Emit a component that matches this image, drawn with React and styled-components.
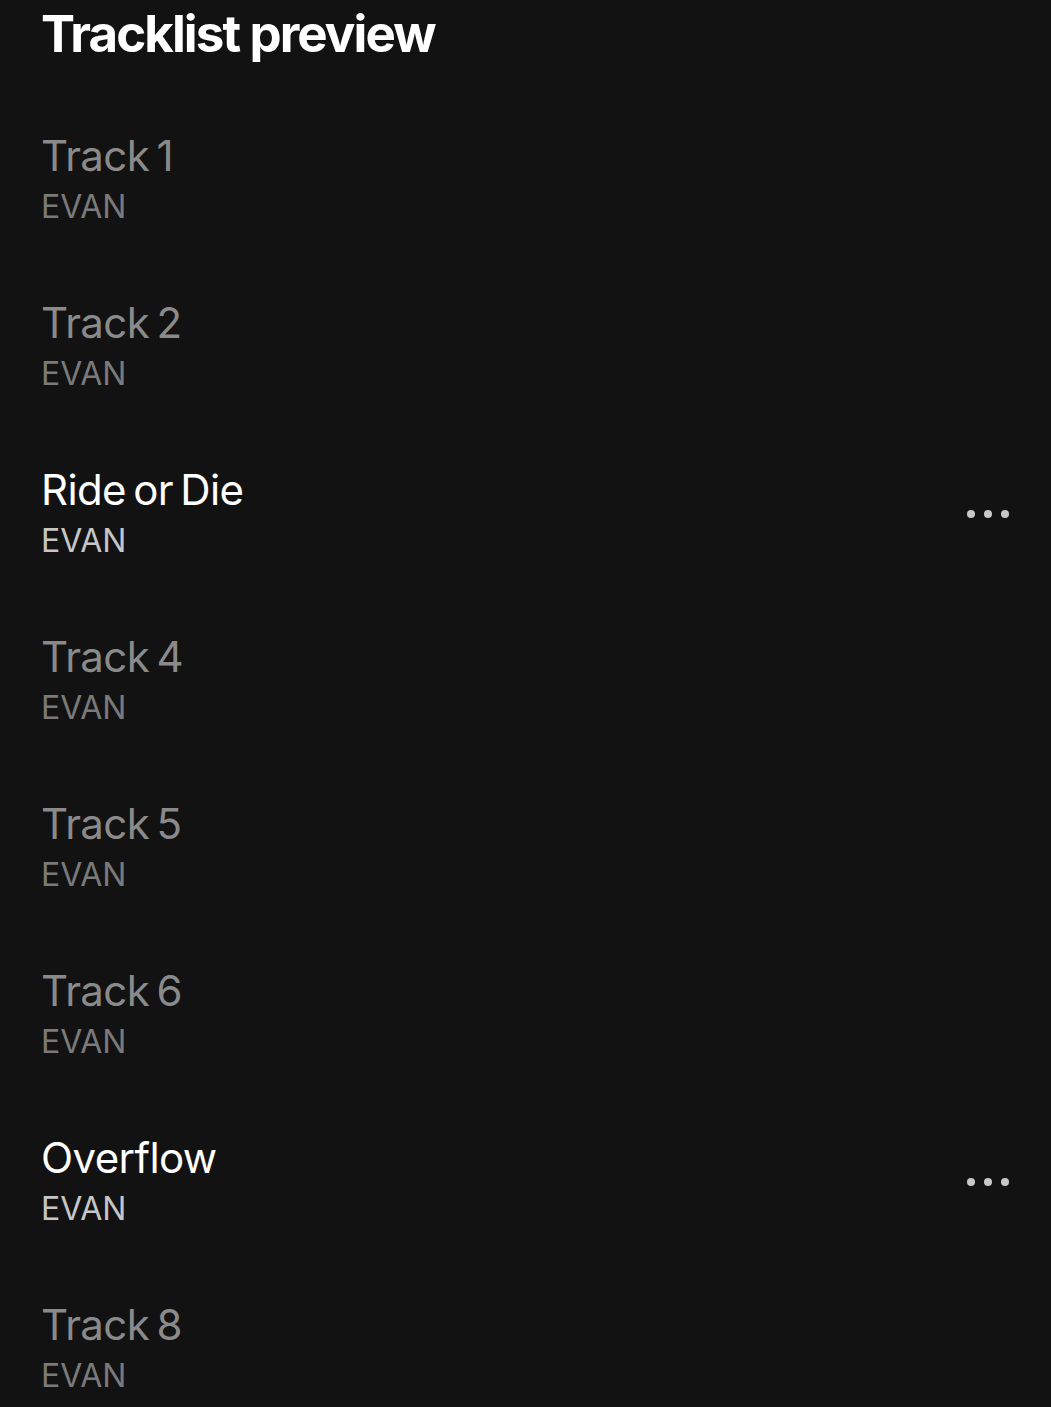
import React from "react";
import styled, { createGlobalStyle } from "styled-components";

const Global = createGlobalStyle`
  html, body { margin: 0; padding: 0; background: #121212; }
  body { font-family: "Inter", "Liberation Sans", sans-serif; }
`;

const Page = styled.div`
  width: 1051px;
  height: 1407px;
  overflow: hidden;
  background: #121212;
  padding: 0 42px 0 41px;
  box-sizing: border-box;
`;

const Heading = styled.h1`
  margin: 0;
  padding-top: 6px;
  font-size: 51px;
  line-height: 56px;
  font-weight: 700;
  letter-spacing: -1.9px;
  color: #ffffff;
`;

const List = styled.div`
  display: flex;
  flex-direction: column;
  margin-top: 70px;
`;

const Row = styled.div`
  height: 167px;
  display: flex;
  align-items: flex-start;
  justify-content: space-between;
`;

const Info = styled.div`
  display: flex;
  flex-direction: column;
`;

const Title = styled.div`
  font-size: 42px;
  line-height: 48px;
  font-weight: 400;
  letter-spacing: -0.6px;
  word-spacing: -4px;
  color: ${(p) => (p.$active ? "#ffffff" : "#8a8a8a")};
`;

const Artist = styled.div`
  margin-top: 9px;
  font-size: 32px;
  line-height: 36px;
  color: ${(p) => (p.$active ? "#c6c6c6" : "#7a7a7a")};
`;

const More = styled.div`
  display: flex;
  gap: 9px;
  margin-top: 44px;
`;

const Dot = styled.span`
  width: 8px;
  height: 8px;
  border-radius: 50%;
  background: #c8c8c8;
`;

const tracks = [
  { t: "Track 1" },
  { t: "Track 2" },
  { t: "Ride or Die", active: true },
  { t: "Track 4" },
  { t: "Track 5" },
  { t: "Track 6" },
  { t: "Overflow", active: true },
  { t: "Track 8" },
];

export default function App() {
  return (
    <>
      <Global />
      <Page>
        <Heading>Tracklist preview</Heading>
        <List>
          {tracks.map((tr) => (
            <Row key={tr.t}>
              <Info>
                <Title $active={tr.active}>{tr.t}</Title>
                <Artist $active={tr.active}>EVAN</Artist>
              </Info>
              {tr.active && (
                <More>
                  <Dot />
                  <Dot />
                  <Dot />
                </More>
              )}
            </Row>
          ))}
        </List>
      </Page>
    </>
  );
}
